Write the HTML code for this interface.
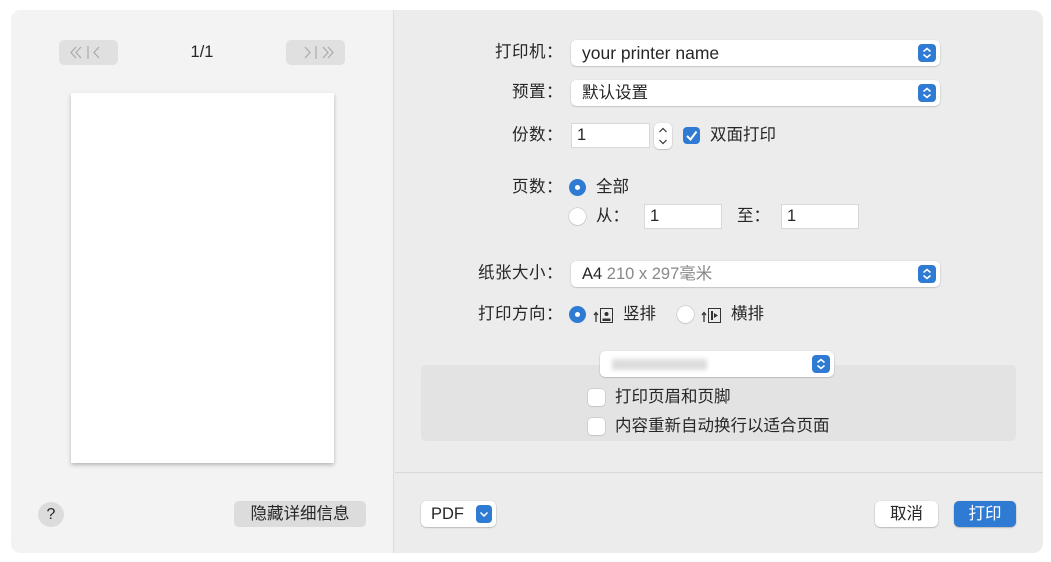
<!DOCTYPE html>
<html><head><meta charset="utf-8"><style>
*{box-sizing:border-box;margin:0;padding:0}
body{width:1051px;height:562px;background:#fff;font-family:"Liberation Sans","Noto Sans CJK SC",sans-serif;font-size:16.5px;line-height:20px;color:#262626;position:relative;overflow:hidden}
.a{position:absolute}
.win{left:11px;top:10px;width:1032px;height:543px;border-radius:10px;overflow:hidden;background:#ececec}
.left{left:0;top:0;width:383px;height:543px;background:#f3f3f3;border-right:1px solid #dcdcdc}
.lbl{text-align:right;width:133px;letter-spacing:0.5px}
.pop{background:#fff;border-radius:5px;box-shadow:0 0.5px 1.5px rgba(0,0,0,.3);height:26px}
.arr{position:absolute;right:4px;top:4px;width:18px;height:18px;border-radius:4px;background:#2f7bd3}
.arr svg{position:absolute;left:0;top:0}
.fld{background:#fff;border:1px solid #d8d8d8;height:25px;padding-left:5px;line-height:23px}
.rad{width:17px;height:17px;border-radius:50%;background:#fff;box-shadow:0 0 0 .5px #bbb,0 1px 1px rgba(0,0,0,.1)}
.rad.on{background:#2f7bd3;box-shadow:none}
.rad.on:after{content:"";position:absolute;left:6px;top:6px;width:5px;height:5px;border-radius:50%;background:#fff}
.cb{width:17px;height:17px;border-radius:4px;background:#fff;box-shadow:0 0 0 .5px #bbb,0 1px 1px rgba(0,0,0,.1)}
.btn{background:#fff;border-radius:5px;box-shadow:0 0.5px 1.5px rgba(0,0,0,.35);text-align:center;line-height:26px;height:26px}
</style></head><body>
<div class="a win">
 <div class="a left">
  <div class="a" style="left:48px;top:30px;width:59px;height:25px;background:#e0e0e0;border-radius:5px"><svg width="59" height="25"><path d="M17 7l-5 5.5 5 5.5M22 7l-5 5.5 5 5.5M29 6v13M40 7l-5 5.5 5 5.5" stroke="#aaa" fill="none" stroke-width="1.2"/></svg></div>
  <div class="a" style="left:275px;top:30px;width:59px;height:25px;background:#e0e0e0;border-radius:5px"><svg width="59" height="25"><path d="M19 7l5 5.5-5 5.5M30 6v13M37 7l5 5.5-5 5.5M42 7l5 5.5-5 5.5" stroke="#aaa" fill="none" stroke-width="1.2"/></svg></div>
  <div class="a" style="left:170px;top:32px;width:42px;text-align:center">1/1</div>
  <div class="a" style="left:60px;top:83px;width:263px;height:370px;background:#fff;box-shadow:0 2px 4px rgba(0,0,0,.25)"></div>
  <div class="a" style="left:27px;top:492px;width:26px;height:25px;border-radius:50%;background:#dcdcdc;text-align:center;line-height:25px;font-size:16px">?</div>
  <div class="a" style="left:223px;top:491px;width:132px;height:26px;border-radius:5px;background:#dcdcdc;text-align:center;line-height:26px">隐藏详细信息</div>
 </div>
 <div class="a lbl" style="left:419px;top:32px">打印机：</div>
 <div class="a pop" style="left:560px;top:30px;width:369px;padding-left:11px;line-height:26px;font-size:17.5px">your printer name<div class="arr"><svg width="18" height="18"><path d="M5.5 7.5l3.5-3 3.5 3M5.5 10.5l3.5 3 3.5-3" stroke="#fff" fill="none" stroke-width="1.5"/></svg></div></div>
 <div class="a lbl" style="left:419px;top:72px">预置：</div>
 <div class="a pop" style="left:560px;top:70px;width:369px;padding-left:11px;line-height:26px">默认设置<div class="arr"><svg width="18" height="18"><path d="M5.5 7.5l3.5-3 3.5 3M5.5 10.5l3.5 3 3.5-3" stroke="#fff" fill="none" stroke-width="1.5"/></svg></div></div>
 <div class="a lbl" style="left:419px;top:115px">份数：</div>
 <div class="a fld" style="left:560px;top:113px;width:79px">1</div>
 <div class="a" style="left:643px;top:113px;width:18px;height:26px;background:#fff;border-radius:5px;box-shadow:0 0.5px 1.5px rgba(0,0,0,.3)"><svg width="18" height="26"><path d="M5.5 9l3.5-3.5 3.5 3.5M5.5 17l3.5 3.5 3.5-3.5" stroke="#333" fill="none" stroke-width="1.2"/></svg></div>
 <div class="a cb" style="left:672px;top:117px;background:#2f7bd3;box-shadow:none"><svg width="17" height="17"><path d="M4 9l3.5 3.5 6-8" stroke="#fff" fill="none" stroke-width="2"/></svg></div>
 <div class="a" style="left:699px;top:115px">双面打印</div>
 <div class="a lbl" style="left:419px;top:167px">页数：</div>
 <div class="a rad on" style="left:558px;top:169px"></div>
 <div class="a" style="left:585px;top:167px">全部</div>
 <div class="a rad" style="left:558px;top:198px"></div>
 <div class="a" style="left:585px;top:196px">从：</div>
 <div class="a fld" style="left:633px;top:194px;width:78px">1</div>
 <div class="a" style="left:726px;top:196px">至：</div>
 <div class="a fld" style="left:770px;top:194px;width:78px">1</div>
 <div class="a lbl" style="left:419px;top:253px">纸张大小：</div>
 <div class="a pop" style="left:560px;top:251px;width:369px;padding-left:11px;line-height:26px">A4 <span style="color:#888">210 x 297毫米</span><div class="arr"><svg width="18" height="18"><path d="M5.5 7.5l3.5-3 3.5 3M5.5 10.5l3.5 3 3.5-3" stroke="#fff" fill="none" stroke-width="1.5"/></svg></div></div>
 <div class="a lbl" style="left:419px;top:294px">打印方向：</div>
 <div class="a rad on" style="left:558px;top:296px"></div>
 <div class="a" style="left:582px;top:295px"><svg width="22" height="20"><path d="M3 17V8M1 10l2-2.5 2 2.5" stroke="#333" fill="none" stroke-width="1.3"/><rect x="7.5" y="3.5" width="12" height="14" fill="none" stroke="#333"/><circle cx="13.5" cy="9" r="2" fill="#333"/><path d="M9.5 16v-2.5h8V16z" fill="#333"/></svg></div>
 <div class="a" style="left:612px;top:294px">竖排</div>
 <div class="a rad" style="left:666px;top:296px"></div>
 <div class="a" style="left:690px;top:295px"><svg width="22" height="20"><path d="M3 17V8M1 10l2-2.5 2 2.5" stroke="#333" fill="none" stroke-width="1.3"/><rect x="7.5" y="3.5" width="12" height="14" fill="none" stroke="#333"/><path d="M10 6h2v9h-2zM13 8l4 2.5-4 2.5z" fill="#333"/></svg></div>
 <div class="a" style="left:720px;top:294px">横排</div>
 <div class="a" style="left:410px;top:355px;width:595px;height:76px;background:#e3e3e3;border-radius:5px"></div>
 <div class="a pop" style="left:589px;top:341px;width:234px;padding-left:10px;line-height:26px"><div class="a" style="left:12px;top:8px;width:95px;height:11px;background:#ddd;filter:blur(2px)"></div><div class="arr"><svg width="18" height="18"><path d="M5.5 7.5l3.5-3 3.5 3M5.5 10.5l3.5 3 3.5-3" stroke="#fff" fill="none" stroke-width="1.5"/></svg></div></div>
 <div class="a cb" style="left:577px;top:379px"></div>
 <div class="a" style="left:604px;top:377px">打印页眉和页脚</div>
 <div class="a cb" style="left:577px;top:408px"></div>
 <div class="a" style="left:604px;top:406px">内容重新自动换行以适合页面</div>
 <div class="a" style="left:384px;top:462px;width:648px;height:1px;background:#d8d8d8"></div>
 <div class="a btn" style="left:410px;top:491px;width:75px;text-align:left;padding-left:10px">PDF<div class="arr" style="right:4px;top:4px;height:18px;width:16px"><svg width="16" height="18"><path d="M4.5 7.5l3.5 3.5 3.5-3.5" stroke="#fff" fill="none" stroke-width="1.5"/></svg></div></div>
 <div class="a btn" style="left:864px;top:491px;width:63px">取消</div>
 <div class="a btn" style="left:943px;top:491px;width:62px;background:#2f7bd3;color:#fff">打印</div>
</div>
</body></html>
